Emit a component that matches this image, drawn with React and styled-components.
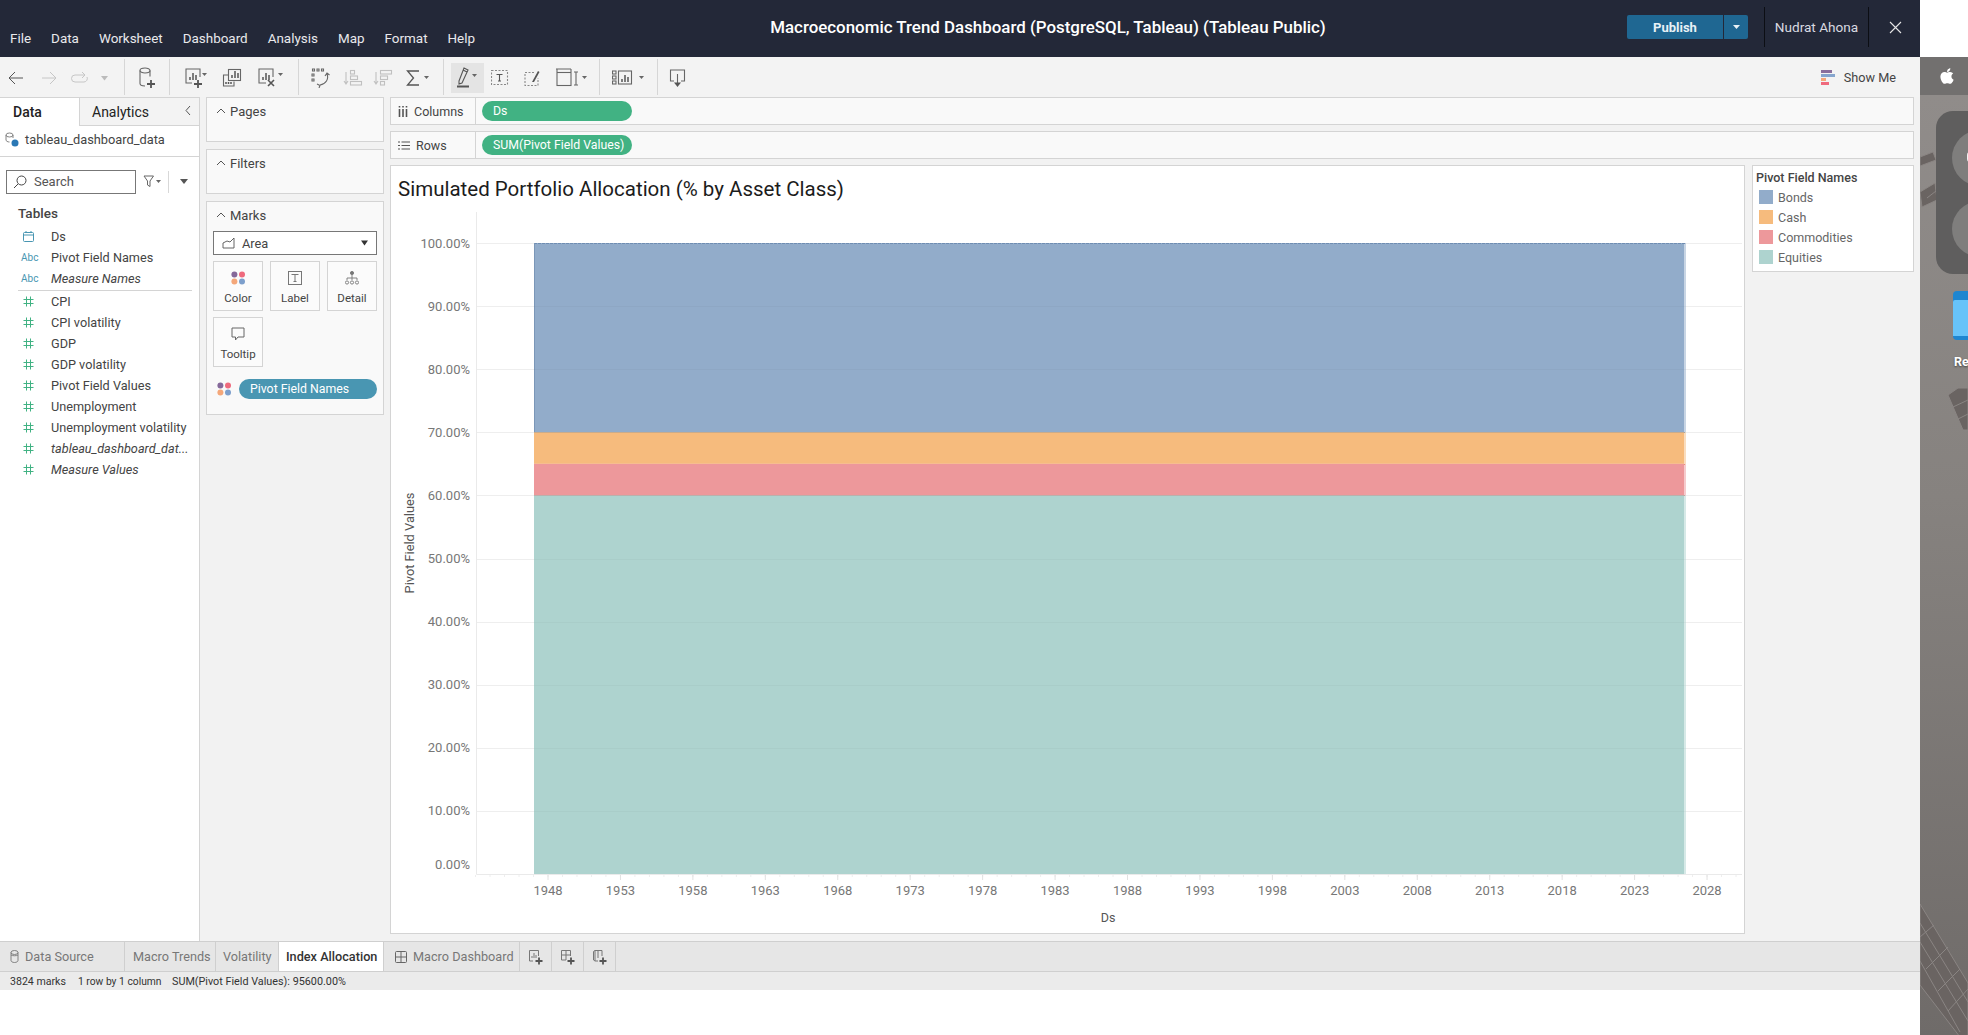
import React from 'react';
import styled, { createGlobalStyle } from 'styled-components';
import { FaApple } from 'react-icons/fa';

const GlobalStyle = createGlobalStyle`
  html, body { margin: 0; padding: 0; background: #fff; overflow: hidden; }
  body { font-family: Roboto, "Liberation Sans", sans-serif; color: #444; }
  * { box-sizing: border-box; }
`;

const Page = styled.div`
  width: 1968px;
  height: 1035px;
  display: flex;
  overflow: hidden;
`;
const AppColumn = styled.div`
  width: 1920px;
  display: flex;
  flex-direction: column;
`;

/* header */
const Header = styled.header`
  height: 57px;
  background: #232838;
  display: flex;
  align-items: center;
  padding: 0 12px 3px 10px;
  flex: none;
`;
const Menu = styled.nav`
  display: flex;
  gap: 20px;
  padding-top: 22px;
  width: 459px;
`;
const MenuItem = styled.span`
  color: #e9e9ec;
  font-size: 13.45px;
`;
const Title = styled.div`
  flex: 1;
  text-align: center;
  color: #fff;
  font-size: 16.9px;
  font-weight: 500;
  white-space: nowrap;
`;
const PublishGroup = styled.div`
  display: flex;
  height: 24px;
  border-radius: 2px;
  overflow: hidden;
  margin-right: 16px;
`;
const PublishButton = styled.div`
  width: 96px;
  background: #1f6792;
  color: #e8f1f6;
  font-size: 13px;
  font-weight: 700;
  display: flex;
  align-items: center;
  justify-content: center;
`;
const PublishCaret = styled.div`
  width: 24px;
  margin-left: 1px;
  background: #1f6792;
  display: flex;
  align-items: center;
  justify-content: center;
`;
const UserBox = styled.div`
  width: 105px;
  height: 40px;
  border-left: 1px solid #0c0e14;
  border-right: 1px solid #0c0e14;
  color: #d9dae0;
  font-size: 13.6px;
  display: flex;
  align-items: center;
  justify-content: center;
  white-space: nowrap;
`;
const CloseBox = styled.div`
  width: 26px;
  margin-left: 13px;
  display: flex;
  justify-content: center;
`;

/* toolbar */
const Toolbar = styled.div`
  height: 40px;
  flex: none;
  background: #f3f3f3;
  display: flex;
  align-items: center;
  padding-right: 24px;
`;
const ToolButton = styled.div`
  width: ${(p) => p.$w}px;
  height: 30px;
  flex: none;
  display: flex;
  align-items: center;
  justify-content: center;
  background: ${(p) => (p.$active ? '#e4e4e4' : 'transparent')};
  margin-top: 2px;
  margin-left: ${(p) => p.$ml || 0}px;
  margin-right: ${(p) => p.$mr || 0}px;
`;
const ToolSep = styled.div`
  width: 1px;
  height: 36px;
  flex: none;
  background: #d6d6d6;
`;
const ShowMe = styled.div`
  margin-left: auto;
  display: flex;
  align-items: center;
  gap: 9px;
  font-size: 12.7px;
  color: #444;
`;

/* workspace */
const Workspace = styled.div`
  height: 844px;
  flex: none;
  display: flex;
  background: #f2f2f2;
`;
const DataPane = styled.aside`
  width: 200px;
  flex: none;
  background: #fff;
  border-right: 1px solid #d4d4d4;
  display: flex;
  flex-direction: column;
`;
const PaneTabs = styled.div`
  height: 29px;
  flex: none;
  display: flex;
  background: #f3f3f3;
`;
const PaneTab = styled.div`
  width: ${(p) => p.$w}px;
  background: ${(p) => (p.$active ? '#fff' : '#f3f3f3')};
  border-top: 1px solid #d4d4d4;
  border-left: ${(p) => (p.$active ? 'none' : '1px solid #d4d4d4')};
  border-bottom: ${(p) => (p.$active ? 'none' : '1px solid #d4d4d4')};
  color: #222;
  font-size: 14px;
  font-weight: ${(p) => (p.$active ? 500 : 400)};
  display: flex;
  align-items: center;
  padding-left: ${(p) => p.$pl}px;
  position: relative;
`;
const Collapse = styled.span`
  position: absolute;
  right: 7px;
  top: 6px;
  display: flex;
`;
const SourceRow = styled.div`
  height: 31px;
  flex: none;
  display: flex;
  align-items: center;
  gap: 6px;
  padding: 0 0 3px 5px;
  font-size: 12.8px;
  color: #444;
  border-bottom: 1px solid #d4d4d4;
`;
const SearchRow = styled.div`
  display: flex;
  align-items: center;
  padding: 13px 0 0 6px;
  height: 36px;
  flex: none;
`;
const SearchBox = styled.div`
  width: 130px;
  height: 24px;
  border: 1px solid #777;
  display: flex;
  align-items: center;
  gap: 7px;
  padding-left: 6px;
  font-size: 13px;
  color: #555;
`;
const SearchTail = styled.div`
  display: flex;
  align-items: center;
  margin-left: 7px;
`;
const SearchDivider = styled.div`
  width: 1px;
  height: 22px;
  background: #d8d8d8;
  margin: 0 10px 0 7px;
`;
const TablesLabel = styled.div`
  font-size: 13.5px;
  font-weight: 500;
  color: #444;
  padding: 12px 0 0 18px;
  height: 33px;
  flex: none;
`;
const FieldList = styled.div`
  display: flex;
  flex-direction: column;
`;
const FieldRow = styled.div`
  height: 21px;
  display: flex;
  align-items: center;
  font-size: 12.7px;
  color: #444;
  font-style: ${(p) => (p.$italic ? 'italic' : 'normal')};
  white-space: nowrap;
`;
const FieldIcon = styled.span`
  width: 51px;
  flex: none;
  padding-left: ${(p) => p.$pl}px;
  display: flex;
  align-items: center;
`;
const AbcIcon = styled.span`
  color: #4996b2;
  font-size: 10px;
  font-style: normal;
`;
const FieldDivider = styled.div`
  height: 1px;
  background: #d4d4d4;
  margin: 1px 7px 0 18px;
`;

const CardsColumn = styled.div`
  width: 178px;
  flex: none;
  margin: 0 6px;
  display: flex;
  flex-direction: column;
  gap: 7px;
`;
const Card = styled.section`
  height: ${(p) => p.$h}px;
  border: 1px solid #d4d4d4;
  background: #f9f9f9;
  flex: none;
  padding: 0 6px;
`;
const CardHead = styled.div`
  height: 26px;
  display: flex;
  align-items: center;
  gap: 4px;
  padding-left: 3px;
  font-size: 13px;
  color: #444;
`;
const MarkSelect = styled.div`
  height: 24px;
  margin-top: 3px;
  border: 1px solid #777;
  background: #fff;
  display: flex;
  align-items: center;
  padding: 0 7px 0 8px;
  gap: 7px;
  font-size: 12.8px;
  color: #444;
`;
const SelectCaret = styled.span`
  margin-left: auto;
  display: flex;
`;
const MarkGrid = styled.div`
  display: grid;
  grid-template-columns: repeat(3, 50px);
  grid-auto-rows: 50px;
  gap: 6px 7px;
  margin-top: 6px;
`;
const MarkCell = styled.div`
  border: 1px solid #d4d4d4;
  background: #fbfbfb;
  display: flex;
  flex-direction: column;
  align-items: center;
  justify-content: flex-end;
  gap: 6px;
  padding-bottom: 5px;
  font-size: 11.5px;
  color: #444;
`;
const MarkPillRow = styled.div`
  display: flex;
  align-items: center;
  margin-top: 12px;
  gap: 7px;
  padding-left: 4px;
`;
const Pill = styled.div`
  width: ${(p) => p.$w}px;
  height: 20px;
  border-radius: 10px;
  background: ${(p) => p.$bg};
  color: #fff;
  font-size: 12.3px;
  display: flex;
  align-items: center;
  padding-left: 11px;
  white-space: nowrap;
`;

const ViewColumn = styled.div`
  flex: 1;
  display: flex;
  flex-direction: column;
  gap: 6px;
  padding-right: 6px;
`;
const Shelf = styled.div`
  height: 28px;
  flex: none;
  border: 1px solid #d4d4d4;
  background: #f9f9f9;
  display: flex;
  align-items: center;
`;
const ShelfLabel = styled.div`
  width: 85px;
  height: 100%;
  flex: none;
  border-right: 1px solid #d4d4d4;
  display: flex;
  align-items: center;
  gap: 6px;
  padding-left: 7px;
  font-size: 12.5px;
  color: #444;
`;
const ShelfBody = styled.div`
  padding-left: 6px;
  display: flex;
`;
const ViewRow = styled.div`
  display: flex;
  align-items: flex-start;
  gap: 7px;
`;
const ChartCard = styled.div`
  width: 1355px;
  height: 769px;
  flex: none;
  background: #fff;
  border: 1px solid #d4d4d4;
  display: flex;
  flex-direction: column;
`;
const ChartTitle = styled.h1`
  height: 46px;
  margin: 0;
  flex: none;
  padding: 9px 0 0 7px;
  font-size: 20.5px;
  line-height: 28px;
  font-weight: 400;
  color: #1c1c1c;
  white-space: nowrap;
`;
const Legend = styled.div`
  width: 162px;
  height: 107px;
  flex: none;
  background: #fff;
  border: 1px solid #d4d4d4;
  padding: 3px 0 0 3px;
`;
const LegendTitle = styled.div`
  font-size: 12.5px;
  font-weight: 500;
  color: #444;
  height: 18px;
  line-height: 18px;
`;
const LegendItem = styled.div`
  height: 20px;
  display: flex;
  align-items: center;
  gap: 5px;
  padding-left: 3px;
  font-size: 12.5px;
  color: #666;
`;
const Swatch = styled.span`
  width: 14px;
  height: 14px;
  background: ${(p) => p.$c};
`;

/* bottom bars */
const TabBar = styled.div`
  height: 31px;
  flex: none;
  background: #e6e6e6;
  border-top: 1px solid #cfcfcf;
  border-bottom: 1px solid #cfcfcf;
  display: flex;
`;
const SheetTab = styled.div`
  width: ${(p) => p.$w}px;
  flex: none;
  display: flex;
  align-items: center;
  gap: 6px;
  padding-left: ${(p) => p.$pl}px;
  font-size: 12.7px;
  color: ${(p) => (p.$active ? '#333' : '#777')};
  font-weight: ${(p) => (p.$active ? 500 : 400)};
  background: ${(p) => (p.$active ? '#fff' : 'transparent')};
  border-right: 1px solid #cfcfcf;
  white-space: nowrap;
`;
const AddTab = styled.div`
  width: 32px;
  flex: none;
  display: flex;
  align-items: center;
  justify-content: center;
  border-right: 1px solid #cfcfcf;
`;
const StatusBar = styled.div`
  height: 18px;
  flex: none;
  background: #ebebeb;
  display: flex;
  align-items: center;
  color: #333;
`;
const StatusText = styled.span`
  width: ${(p) => p.$w}px;
  padding-left: ${(p) => p.$pl || 0}px;
  font-size: ${(p) => p.$size}px;
  white-space: nowrap;
`;

/* the macOS desktop showing beside the window */
const Desktop = styled.div`
  width: 48px;
  height: 978px;
  margin-top: 57px;
  flex: none;
  position: relative;
  overflow: hidden;
  background: linear-gradient(180deg, #918d8b 0%, #86827f 45%, #6f6b69 100%);
`;
const MacBar = styled.div`
  position: relative;
  height: 38px;
  background: #72706f;
  color: #fff;
  display: flex;
  align-items: center;
  padding-left: 18px;
  font-size: 18px;
`;
const Panels = styled.svg`
  position: absolute;
  left: 0;
  top: 0;
`;
const Widget = styled.div`
  position: absolute;
  left: 16px;
  top: 54px;
  width: 80px;
  height: 163px;
  background: #5f5e5e;
  border-radius: 17px;
`;
const WidgetDial = styled.div`
  position: absolute;
  left: 16px;
  top: ${(p) => p.$top}px;
  width: 56px;
  height: 56px;
  border-radius: 50%;
  background: #7f7e7d;
`;
const WidgetDot = styled.div`
  position: absolute;
  left: 31px;
  top: 41px;
  width: 6px;
  height: 10px;
  border-radius: 3px;
  background: #f1f1f1;
`;
const Folder = styled.div`
  position: absolute;
  left: 33px;
  top: 234px;
  width: 40px;
  height: 49px;
  border-radius: 4px;
  background: #1f86d0;
  overflow: hidden;
`;
const FolderFront = styled.div`
  margin-top: 9px;
  height: 36px;
  background: #67c3f9;
  border-radius: 2px 0 0 0;
`;
const DesktopLabel = styled.div`
  position: absolute;
  left: 34px;
  top: 297px;
  color: #fff;
  font-size: 12.5px;
  font-weight: 700;
  text-shadow: 0 1px 2px rgba(0, 0, 0, 0.5);
`;

/* icons */
const Svg = ({ w = 20, h = 20, children, sw = 1.1, stroke = '#666' }) => (
  <svg width={w} height={h} viewBox={`0 0 ${w} ${h}`} fill="none" stroke={stroke} strokeWidth={sw} style={{ display: 'block', flex: 'none' }}>
    {children}
  </svg>
);
const Tri = ({ x, y = 9, c = '#666' }) => <path d={`M${x} ${y}h5l-2.5 3z`} fill={c} stroke="none" />;
const Plus = ({ x, y, s = 4 }) => <path d={`M${x - s} ${y}h${s * 2}M${x} ${y - s}v${s * 2}`} stroke="#555" strokeWidth="1.8" />;
const Bars = ({ x, y }) => <path d={`M${x} ${y}v-3M${x + 3} ${y}v-7M${x + 6} ${y}v-5`} strokeWidth="1.5" stroke="#555" />;

const ColorDots = () => (
  <svg width="15" height="14" viewBox="0 0 15 14" style={{ display: 'block', flex: 'none' }}>
    <circle cx="3.4" cy="3.4" r="3" fill="#85699a" />
    <circle cx="11" cy="3.4" r="3" fill="#ef6a7d" />
    <circle cx="3.4" cy="10.6" r="3" fill="#f4a77a" />
    <circle cx="11" cy="10.6" r="3" fill="#7d9fcc" />
  </svg>
);
const HashIcon = () => (
  <Svg w={11} h={11} sw={1} stroke="#41b283">
    <path d="M3.5 0.5v10M7.5 0.5v10M0.5 3.5h10M0.5 7.5h10" />
  </Svg>
);
const CalendarIcon = () => (
  <Svg w={11} h={11} sw={1} stroke="#4996b2">
    <rect x="0.5" y="1.5" width="10" height="9" rx="1" />
    <path d="M0.5 4h10M3 0v2M8 0v2" />
  </Svg>
);
const Chevron = ({ up }) => (
  <Svg w={10} h={8} sw={1} stroke="#555">
    <path d={up ? 'M1 6l4-4 4 4' : 'M1 2l4 4 4-4'} />
  </Svg>
);

const toolIcons = {
  back: (
    <Svg w={16} h={14} sw={1} stroke="#555"><path d="M15 7H1M7 1L1 7l6 6" /></Svg>
  ),
  forward: (
    <Svg w={16} h={14} sw={1} stroke="#c6c6c6"><path d="M1 7h14M9 1l6 6-6 6" /></Svg>
  ),
  redo: (
    <Svg w={20} h={14} sw={1} stroke="#c6c6c6"><path d="M14 4H5a3.5 3.5 0 0 0 0 7h9a3.5 3.5 0 0 0 3-5M12 1l3 3-3 3" /></Svg>
  ),
  caretOff: <Svg w={9} h={8}><path d="M1 2h7L4.5 6.5z" fill="#bbb" stroke="none" /></Svg>,
  newSource: (
    <Svg w={18} h={24} stroke="#666">
      <ellipse cx="7" cy="4.5" rx="5" ry="2.5" />
      <path d="M2 4.5v13c0 1.5 2 2.5 5 2.5M12 4.5v6" />
      <Plus x={13} y={18} />
    </Svg>
  ),
  newSheet: (
    <Svg w={24} h={24} stroke="#666">
      <path d="M8 17H2V3h14v8" />
      <Bars x={6} y={14} />
      <Plus x={14} y={18} />
      <Tri x={18} y={7} />
    </Svg>
  ),
  duplicate: (
    <Svg w={20} h={20} stroke="#666">
      <rect x="6.5" y="1.5" width="12" height="11" />
      <Bars x={10} y={10} />
      <path d="M6 7H1.5v11H12v-4.5" />
      <path d="M4 16v-2M6.5 16v-2M9 16v-2" strokeWidth="1.5" stroke="#555" />
    </Svg>
  ),
  clear: (
    <Svg w={27} h={24} stroke="#666">
      <path d="M9 17H2V3h14v8" />
      <Bars x={6} y={14} />
      <path d="M11 14l6 6M17 14l-6 6" stroke="#555" strokeWidth="1.6" />
      <Tri x={21} y={7} />
    </Svg>
  ),
  swap: (
    <Svg w={20} h={20} stroke="#666">
      <path d="M1.5 1h2v2h-2zM6 1h2v2H6zM10.5 1h2v2h-2zM1 6h2v2H1zM1 11h2v2H1z" />
      <path d="M16 6c2 5-1 10-7 11M6 16l3 1.5L8 20M14 8l2-3 2.5 2" />
    </Svg>
  ),
  sortUp: (
    <Svg w={20} h={18} stroke="#c0c0c0">
      <path d="M3 3v12M1 12l2 3 2-3" />
      <rect x="7.5" y="1.5" width="4" height="3.5" />
      <rect x="7.5" y="7" width="7" height="3.5" />
      <rect x="7.5" y="12.5" width="11" height="3.5" />
    </Svg>
  ),
  sortDown: (
    <Svg w={20} h={18} stroke="#c0c0c0">
      <path d="M3 3v12M1 12l2 3 2-3" />
      <rect x="7.5" y="1.5" width="11" height="3.5" />
      <rect x="7.5" y="7" width="7" height="3.5" />
      <rect x="7.5" y="12.5" width="4" height="3.5" />
    </Svg>
  ),
  sigma: (
    <Svg w={25} h={18} stroke="#555" sw={1.3}>
      <path d="M13 2H1.5l6 7-6 7H13" />
      <Tri x={18} y={7} />
    </Svg>
  ),
  highlight: (
    <Svg w={22} h={24} stroke="#555">
      <path d="M2 15L7 2l4 2-6 13-3 1zM6 4l4 2" />
      <path d="M0 20.5h12" strokeWidth="2" stroke="#555" />
      <Tri x={15} y={8} />
    </Svg>
  ),
  label: (
    <Svg w={18} h={16} stroke="#888">
      <rect x="0.5" y="0.5" width="16" height="14" strokeDasharray="2 1.5" />
      <path d="M5.5 4.5h6M8.5 4.5v6.5M7 11h3" stroke="#555" />
    </Svg>
  ),
  annotate: (
    <Svg w={18} h={18} stroke="#888">
      <path d="M10 3.5H1v13h13V9" strokeDasharray="2 1.5" />
      <path d="M8 13L14 2l1.5 1L10 13z" fill="#555" stroke="none" />
    </Svg>
  ),
  fit: (
    <Svg w={32} h={20} stroke="#666">
      <path d="M0 1h15M1 1v3M15 1v3" />
      <rect x="1" y="4.5" width="14" height="13" />
      <path d="M18 4h4M20 4v13M18 17h4" />
      <Tri x={26} y={8} />
    </Svg>
  ),
  showCards: (
    <Svg w={34} h={20} stroke="#666">
      <rect x="0.5" y="3" width="3.5" height="3" />
      <rect x="0.5" y="8" width="3.5" height="3" />
      <rect x="0.5" y="13" width="3.5" height="3" />
      <rect x="6.5" y="3" width="13" height="13" />
      <Bars x={10} y={14} />
      <Tri x={27} y={8} />
    </Svg>
  ),
  present: (
    <Svg w={18} h={20} stroke="#666">
      <path d="M5 13H1.5V2h14v11H12" />
      <path d="M8.5 6v11" />
      <path d="M5 14.5h7L8.5 19z" fill="#555" stroke="none" />
    </Svg>
  ),
};

const ShowMeIcon = () => (
  <svg width="14" height="15" viewBox="0 0 14 15" style={{ display: 'block' }}>
    <rect x="0" y="0" width="11" height="3" fill="#8a6f9c" />
    <rect x="0" y="4" width="14" height="3" fill="#86a5cd" />
    <rect x="0" y="8" width="5" height="3" fill="#f4a77a" />
    <rect x="0" y="12" width="8" height="3" fill="#ef6a7d" />
  </svg>
);

const menuItems = ['File', 'Data', 'Worksheet', 'Dashboard', 'Analysis', 'Map', 'Format', 'Help'];

const fieldsTop = [
  { name: 'Ds', type: 'date' },
  { name: 'Pivot Field Names', type: 'abc' },
  { name: 'Measure Names', type: 'abc', italic: true },
];
const fieldsBottom = [
  { name: 'CPI' },
  { name: 'CPI volatility' },
  { name: 'GDP' },
  { name: 'GDP volatility' },
  { name: 'Pivot Field Values' },
  { name: 'Unemployment' },
  { name: 'Unemployment volatility' },
  { name: 'tableau_dashboard_dat...', italic: true },
  { name: 'Measure Values', italic: true },
];

const legend = [
  { name: 'Bonds', color: '#92acca' },
  { name: 'Cash', color: '#f6bb7d' },
  { name: 'Commodities', color: '#ed989b' },
  { name: 'Equities', color: '#aed3cf' },
];

const Field = ({ f }) => (
  <FieldRow $italic={f.italic}>
    <FieldIcon $pl={f.type === 'abc' ? 21 : 23}>
      {f.type === 'date' && <CalendarIcon />}
      {f.type === 'abc' && <AbcIcon>Abc</AbcIcon>}
      {!f.type && <HashIcon />}
    </FieldIcon>
    {f.name}
  </FieldRow>
);

// chart is drawn in page coordinates, the group shift puts it back in the card
const Y_TOP = 243;
const Y_STEP = 63.1;
const X_LEFT = 534;
const X_RIGHT = 1684;
const yAt = (pct) => Y_TOP + ((100 - pct) / 10) * Y_STEP;
const chartText = { fontFamily: 'Roboto, "Liberation Sans", sans-serif', fontSize: 13, fill: '#777' };

const Chart = () => {
  const years = [];
  for (let y = 1948; y <= 2028; y += 5) years.push(y);
  const minor = [];
  for (let i = -5; i <= 83; i++) minor.push(548 + i * 14.488);
  const pcts = [100, 90, 80, 70, 60, 50, 40, 30, 20, 10, 0];
  const bands = [
    { from: 100, to: 70, fill: '#92acca', edge: '#7b97b8' },
    { from: 70, to: 65, fill: '#f6bb7d', edge: '#ee8a50' },
    { from: 65, to: 60, fill: '#ed989b', edge: '#dc8a85' },
    { from: 60, to: 0, fill: '#aed3cf', edge: 'none' },
  ];
  return (
    <svg width="1353" height="721" style={{ display: 'block' }}>
      <g transform="translate(-391 -212)">
        <path d="M476.5 212V874.5H1742" stroke="#eaeaea" fill="none" />
        {pcts.slice(0, -1).map((p) => (
          <path key={p} d={`M477 ${Math.round(yAt(p)) + 0.5}H1742`} stroke="#eeeeee" />
        ))}
        {minor.map((x, i) => (
          <path key={i} d={`M${x} 875v2`} stroke="#eeeeee" />
        ))}
        {years.map((y, i) => (
          <path key={y} d={`M${548 + i * 72.44} 875v5`} stroke="#e2e2e2" />
        ))}
        {bands.map((b) => (
          <g key={b.from}>
            <rect x={X_LEFT} y={yAt(b.from)} width={X_RIGHT - X_LEFT} height={yAt(b.to) - yAt(b.from)} fill={b.fill} />
            <rect x={X_RIGHT} y={yAt(b.from)} width="2" height={yAt(b.to) - yAt(b.from)} fill={b.fill} opacity="0.5" />
            <path d={`M${X_LEFT} ${Math.round(yAt(b.to)) + 0.5}H${X_RIGHT + 1}`} stroke={b.edge} />
          </g>
        ))}
        <path d={`M${X_LEFT} 243.5H${X_RIGHT + 1}`} stroke="#6f8db2" strokeDasharray="3 1" />
        <path d={`M${X_LEFT + 0.5} 243V432`} stroke="#7b97b8" />
        {pcts.slice(1, -1).map((p) => (
          <path key={p} d={`M${X_LEFT} ${Math.round(yAt(p)) + 0.5}H${X_RIGHT}`} stroke="#000" opacity="0.025" />
        ))}
        {pcts.map((p) => (
          <text key={p} x="470" y={p === 0 ? 869 : yAt(p) + 4.5} textAnchor="end" style={chartText}>
            {p.toFixed(2)}%
          </text>
        ))}
        {years.map((y, i) => (
          <text key={y} x={548 + i * 72.44} y="895" textAnchor="middle" style={chartText}>
            {y}
          </text>
        ))}
        <text x="1108" y="922" textAnchor="middle" style={{ ...chartText, fontSize: 12.5, fill: '#555' }}>
          Ds
        </text>
        <text
          transform="translate(414 543) rotate(-90)"
          textAnchor="middle"
          style={{ ...chartText, fontSize: 12.8, fill: '#555' }}
        >
          Pivot Field Values
        </text>
      </g>
    </svg>
  );
};

const SolarPanels = () => (
  <Panels width="48" height="978" viewBox="0 0 48 978">
    <g fill="#6a6462" stroke="#8a8583" strokeWidth="1">
      <path d="M0 100L13 95L16 103L0 109z" />
      <path d="M0 135L15 126L17 143L2 150z" />
      <path d="M7 141L16 134" />
      <path d="M28 338L38 331H48V373H43z" />
      <path d="M33 350L48 343M38 362L48 357" />
      <path d="M0 847L48 926V980H40L0 928z" />
      <path d="M0 866L48 945M0 885L48 964M0 904L40 975M14 868L0 880M28 890L6 912M40 912L18 934M48 932L28 954" />
    </g>
  </Panels>
);

const App = () => (
  <>
    <GlobalStyle />
    <Page>
      <AppColumn>
        <Header>
          <Menu>
            {menuItems.map((m) => (
              <MenuItem key={m}>{m}</MenuItem>
            ))}
          </Menu>
          <Title>Macroeconomic Trend Dashboard (PostgreSQL, Tableau) (Tableau Public)</Title>
          <PublishGroup>
            <PublishButton>Publish</PublishButton>
            <PublishCaret>
              <Svg w={9} h={6}><path d="M1 1h7L4.5 5z" fill="#e8f1f6" stroke="none" /></Svg>
            </PublishCaret>
          </PublishGroup>
          <UserBox>Nudrat Ahona</UserBox>
          <CloseBox>
            <Svg w={13} h={13} stroke="#e6e6e6"><path d="M1 1l11 11M12 1L1 12" /></Svg>
          </CloseBox>
        </Header>

        <Toolbar>
          <ToolButton $w={32}>{toolIcons.back}</ToolButton>
          <ToolButton $w={34}>{toolIcons.forward}</ToolButton>
          <ToolButton $w={28}>{toolIcons.redo}</ToolButton>
          <ToolButton $w={20} $mr={10}>{toolIcons.caretOff}</ToolButton>
          <ToolSep />
          <ToolButton $w={44}>{toolIcons.newSource}</ToolButton>
          <ToolSep />
          <ToolButton $w={52}>{toolIcons.newSheet}</ToolButton>
          <ToolButton $w={20}>{toolIcons.duplicate}</ToolButton>
          <ToolButton $w={56}>{toolIcons.clear}</ToolButton>
          <ToolSep />
          <ToolButton $w={44}>{toolIcons.swap}</ToolButton>
          <ToolButton $w={20}>{toolIcons.sortUp}</ToolButton>
          <ToolButton $w={40}>{toolIcons.sortDown}</ToolButton>
          <ToolButton $w={30} $mr={10}>{toolIcons.sigma}</ToolButton>
          <ToolSep />
          <ToolButton $w={33} $ml={7} $active>{toolIcons.highlight}</ToolButton>
          <ToolButton $w={32}>{toolIcons.label}</ToolButton>
          <ToolButton $w={34}>{toolIcons.annotate}</ToolButton>
          <ToolButton $w={44} $mr={5}>{toolIcons.fit}</ToolButton>
          <ToolSep />
          <ToolButton $w={57}>{toolIcons.showCards}</ToolButton>
          <ToolSep />
          <ToolButton $w={40}>{toolIcons.present}</ToolButton>
          <ShowMe>
            <ShowMeIcon />
            Show Me
          </ShowMe>
        </Toolbar>

        <Workspace>
          <DataPane>
            <PaneTabs>
              <PaneTab $w={79} $active $pl={13}>Data</PaneTab>
              <PaneTab $w={120} $pl={12}>
                Analytics
                <Collapse>
                  <Svg w={8} h={13} sw={1} stroke="#555"><path d="M6 2L2 6.5 6 11" /></Svg>
                </Collapse>
              </PaneTab>
            </PaneTabs>
            <SourceRow>
              <Svg w={14} h={15} sw={0.9} stroke="#777">
                <ellipse cx="4.5" cy="3" rx="3.5" ry="2" />
                <path d="M1 3v5c0 1 1.5 2 3.5 2M8 3v3" />
                <circle cx="10" cy="11" r="3.5" fill="#2a78b5" stroke="none" />
              </Svg>
              tableau_dashboard_data
            </SourceRow>
            <SearchRow>
              <SearchBox>
                <Svg w={14} h={14} sw={1} stroke="#444">
                  <circle cx="8.5" cy="5.5" r="4.5" />
                  <path d="M5 9l-4 4" />
                </Svg>
                Search
              </SearchBox>
              <SearchTail>
                <Svg w={18} h={13} sw={1} stroke="#666">
                  <path d="M1 1h9.5L7 6v5.5L4.5 10V6z" />
                  <Tri x={13} y={5} />
                </Svg>
                <SearchDivider />
                <Svg w={10} h={7}><path d="M1 1h8L5 6z" fill="#555" stroke="none" /></Svg>
              </SearchTail>
            </SearchRow>
            <TablesLabel>Tables</TablesLabel>
            <FieldList>
              {fieldsTop.map((f) => (
                <Field key={f.name} f={f} />
              ))}
              <FieldDivider />
              {fieldsBottom.map((f) => (
                <Field key={f.name} f={f} />
              ))}
            </FieldList>
          </DataPane>

          <CardsColumn>
            <Card $h={45}>
              <CardHead><Chevron up />Pages</CardHead>
            </Card>
            <Card $h={45}>
              <CardHead><Chevron up />Filters</CardHead>
            </Card>
            <Card $h={214}>
              <CardHead><Chevron up />Marks</CardHead>
              <MarkSelect>
                <Svg w={13} h={12} sw={0.9} stroke="#555">
                  <path d="M1 11V6l4-2 3 1 4-4v10z" />
                </Svg>
                Area
                <SelectCaret>
                  <Svg w={9} h={6}><path d="M1 0.5h7L4.5 5.5z" fill="#333" stroke="none" /></Svg>
                </SelectCaret>
              </MarkSelect>
              <MarkGrid>
                <MarkCell>
                  <ColorDots />
                  Color
                </MarkCell>
                <MarkCell>
                  <Svg w={14} h={14} sw={1} stroke="#777">
                    <rect x="0.5" y="0.5" width="13" height="13" />
                    <path d="M3.5 3.5h7M7 3.5v7M5.5 10.5h3" />
                  </Svg>
                  Label
                </MarkCell>
                <MarkCell>
                  <Svg w={14} h={14} sw={0.9} stroke="#777">
                    <circle cx="7" cy="2" r="1.6" fill="#777" />
                    <path d="M7 4v3M2 9V7h10v2M7 7v2" />
                    <circle cx="2" cy="11.5" r="1.6" />
                    <circle cx="7" cy="11.5" r="1.6" />
                    <circle cx="12" cy="11.5" r="1.6" />
                  </Svg>
                  Detail
                </MarkCell>
                <MarkCell>
                  <Svg w={14} h={14} sw={1} stroke="#666">
                    <path d="M1 1h12v9H7l-2.5 3V10H1z" />
                  </Svg>
                  Tooltip
                </MarkCell>
              </MarkGrid>
              <MarkPillRow>
                <ColorDots />
                <Pill $w={138} $bg="#4996b2">Pivot Field Names</Pill>
              </MarkPillRow>
            </Card>
          </CardsColumn>

          <ViewColumn>
            <Shelf>
              <ShelfLabel>
                <Svg w={10} h={11} sw={1.6} stroke="#555"><path d="M1.5 3v8M5 3v8M8.5 3v8M1.5 0v1.5M5 0v1.5M8.5 0v1.5" /></Svg>
                Columns
              </ShelfLabel>
              <ShelfBody><Pill $w={150} $bg="#41b283">Ds</Pill></ShelfBody>
            </Shelf>
            <Shelf>
              <ShelfLabel>
                <Svg w={12} h={9} sw={1.2} stroke="#555"><path d="M0 1h2M3.5 1H12M0 4.5h2M3.5 4.5H12M0 8h2M3.5 8H12" /></Svg>
                Rows
              </ShelfLabel>
              <ShelfBody><Pill $w={150} $bg="#41b283">SUM(Pivot Field Values)</Pill></ShelfBody>
            </Shelf>
            <ViewRow>
              <ChartCard>
                <ChartTitle>Simulated Portfolio Allocation (% by Asset Class)</ChartTitle>
                <Chart />
              </ChartCard>
              <Legend>
                <LegendTitle>Pivot Field Names</LegendTitle>
                {legend.map((l) => (
                  <LegendItem key={l.name}>
                    <Swatch $c={l.color} />
                    {l.name}
                  </LegendItem>
                ))}
              </Legend>
            </ViewRow>
          </ViewColumn>
        </Workspace>

        <TabBar>
          <SheetTab $w={125} $pl={10}>
            <Svg w={9} h={13} sw={0.9} stroke="#777">
              <ellipse cx="4.5" cy="2.5" rx="3.5" ry="2" />
              <path d="M1 2.5v8c0 1 1.5 2 3.5 2s3.5-1 3.5-2v-8M1 5c1 1 6 1 7 0" />
            </Svg>
            Data Source
          </SheetTab>
          <SheetTab $w={91} $pl={8}>Macro Trends</SheetTab>
          <SheetTab $w={63} $pl={7}>Volatility</SheetTab>
          <SheetTab $w={105} $pl={7} $active>Index Allocation</SheetTab>
          <SheetTab $w={136} $pl={11}>
            <Svg w={12} h={12} sw={1} stroke="#666">
              <rect x="0.5" y="0.5" width="11" height="11" rx="1" />
              <path d="M6 0.5v11M0.5 6h11" />
            </Svg>
            Macro Dashboard
          </SheetTab>
          <AddTab>
            <Svg w={16} h={16} sw={1} stroke="#777">
              <path d="M5 12H1.5V1.5h9V7" />
              <path d="M4 9V7M6 9V4M8 9V6" />
              <Plus x={11} y={12} s={3.5} />
            </Svg>
          </AddTab>
          <AddTab>
            <Svg w={16} h={16} sw={1} stroke="#777">
              <path d="M6 11H1.5V1.5h9V7M6 1.5V11M1.5 6h9" />
              <Plus x={11} y={12} s={3.5} />
            </Svg>
          </AddTab>
          <AddTab>
            <Svg w={16} h={16} sw={1} stroke="#777">
              <path d="M3 1.5h7V7M3 1.5l-1.5 1v8.5l1.5 1h3M3 1.5V12M6 1.5V9" />
              <Plus x={11} y={12} s={3.5} />
            </Svg>
          </AddTab>
        </TabBar>
        <StatusBar>
          <StatusText $w={78} $pl={10} $size={10.6}>3824 marks</StatusText>
          <StatusText $w={94} $size={10.3}>1 row by 1 column</StatusText>
          <StatusText $size={10.8}>SUM(Pivot Field Values): 95600.00%</StatusText>
        </StatusBar>
      </AppColumn>

      <Desktop>
        <SolarPanels />
        <MacBar><FaApple /></MacBar>
        <Widget>
          <WidgetDial $top={19} />
          <WidgetDial $top={90} />
          <WidgetDot />
        </Widget>
        <Folder><FolderFront /></Folder>
        <DesktopLabel>Re</DesktopLabel>
      </Desktop>
    </Page>
  </>
);

export default App;
